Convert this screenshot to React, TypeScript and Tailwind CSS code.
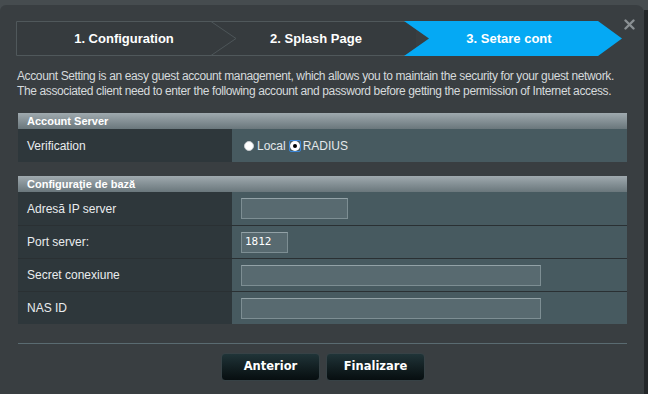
import React from "react";

const arial = { fontFamily: '"Liberation Sans", Arial, sans-serif' };

function Input({ w, value }: { w: string; value?: string }) {
  return (
    <div
      className={`${w} h-[21px] bg-[#586a70] border border-[#7d8e93] border-t-[#93a2a7] flex items-center pl-[3px] text-[11px] text-white`}
      style={{ fontFamily: '"DejaVu Sans Mono", monospace' }}
    >
      {value}
    </div>
  );
}

function Row({ label, children, first }: { label: string; children: React.ReactNode; first?: boolean }) {
  return (
    <div className={`flex h-[33px] ${first ? "" : "border-t border-[#2a3033]"}`}>
      <div className="w-[214px] bg-[#2e373b] flex items-center pl-[9px] text-[12px] text-[#e9ecee]">{label}</div>
      <div className="flex-1 bg-[#475a60] flex items-center pl-[9px]">{children}</div>
    </div>
  );
}

function Header({ title }: { title: string }) {
  return (
    <div className="h-[16px] bg-gradient-to-b from-[#a0aaaf] to-[#6a777c] flex items-center pl-[9px] text-[11px] font-bold text-white">
      {title}
    </div>
  );
}

export default function App() {
  return (
    <div className="w-[648px] h-[394px] bg-[#464c4f] flex overflow-hidden" style={arial}>
      <div className="relative mt-[5px] w-[644px] h-[389px] bg-[#393e41] rounded-tl-[6px] rounded-tr-[8px]">
        {/* close */}
        <svg className="absolute left-[624px] top-[14px]" width="11" height="11" viewBox="0 0 11 11">
          <path d="M1.5 1.5 L9.5 9.5 M9.5 1.5 L1.5 9.5" stroke="#8a9093" strokeWidth="2.4" strokeLinecap="round" />
        </svg>
        <div className="ml-[17px] w-[610px] pt-[16px]">
          {/* steps */}
          <div className="relative h-[35px] -ml-[1px]">
            <svg className="absolute left-0 top-0" width="607" height="35" viewBox="0 0 607 35">
              <rect x="0" y="0" width="400" height="35" fill="#363b3e" />
              <path d="M389 0.5 L0.5 0.5 L0.5 34.5 L389 34.5" fill="none" stroke="#50585b" strokeWidth="1" />
              <path d="M195 0.5 L220 17.5 L195 34.5" fill="none" stroke="#4e5659" strokeWidth="1" />
              <polygon points="388,0 582,0 606,17.5 582,35 388,35 413,17.5" fill="#05a9f4" />
            </svg>
            <div className="relative flex h-full text-[13px] font-bold text-white">
              <div className="w-[216px] flex items-center justify-center">1. Configuration</div>
              <div className="w-[168px] flex items-center justify-center">2. Splash Page</div>
              <div className="w-[218px] flex items-center justify-center">3. Setare cont</div>
            </div>
          </div>

          <p className="mt-[13px] text-[12px] leading-[15px] tracking-[-0.38px] text-[#d6dadc] whitespace-nowrap">
            Account Setting is an easy guest account management, which allows you to maintain the security for your guest network.
            <br />
            The associated client need to enter the following account and password before getting the permission of Internet access.
          </p>

          <div className="mt-[14px] ml-[1px] w-[609px]">
            <Header title="Account Server" />
            <Row label="Verification" first>
              <div className="flex items-center text-[12px] text-[#e4e8ea] mt-[1px]">
                <span className="w-[10px] h-[10px] rounded-full bg-white border border-[#c9cdd0] ml-[3px]" />
                <span className="ml-[3px]">Local</span>
                <span className="ml-[3px] w-[12px] h-[12px] border border-[#3b86d8] rounded-[2px] flex items-center justify-center">
                  <span className="w-[10px] h-[10px] rounded-full bg-white flex items-center justify-center">
                    <span className="w-[4px] h-[4px] rounded-full bg-black" />
                  </span>
                </span>
                <span className="ml-[2px]">RADIUS</span>
              </div>
            </Row>
          </div>

          <div className="mt-[14px] ml-[1px] w-[609px]">
            <Header title="Configuraţie de bază" />
            <Row label="Adresă IP server" first>
              <Input w="w-[107px]" />
            </Row>
            <Row label="Port server:">
              <Input w="w-[47px]" value="1812" />
            </Row>
            <Row label="Secret conexiune">
              <Input w="w-[300px]" />
            </Row>
            <Row label="NAS ID">
              <Input w="w-[300px]" />
            </Row>
          </div>

          <div className="mt-[19px] ml-[1px] w-[609px] h-[1px] bg-[#5a6b71]" />

          <div className="mt-[9px] flex justify-center gap-[6px] pl-[2px]">
            {["Anterior", "Finalizare"].map((t) => (
              <div
                key={t}
                className="w-[99px] h-[28px] rounded-[4px] border border-[#374246] bg-gradient-to-b from-[#203438] to-[#070e10] flex items-center justify-center text-[11.5px] font-bold text-white"
                style={{ fontFamily: '"DejaVu Sans", Verdana, sans-serif' }}
              >
                {t}
              </div>
            ))}
          </div>
        </div>
      </div>
      <div className="mt-[10px] w-[4px] h-[384px] bg-[#232729]" />
    </div>
  );
}
